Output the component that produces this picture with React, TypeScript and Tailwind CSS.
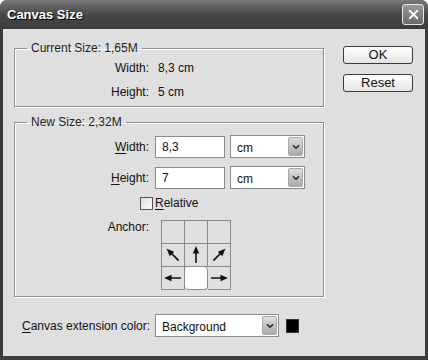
import { ChevronDown, X } from "lucide-react";

const font = "font-['Liberation_Sans',Arial,sans-serif]";

function Select({ value, width }: { value: string; width: string }) {
  return (
    <div className={`flex h-[23px] items-center border border-[#8a8a8a] bg-white ${width}`}>
      <span className="flex-1 pl-[6px] pt-[2px] text-[12px]">{value}</span>
      <span className="mr-[1px] flex h-[19px] w-[15px] items-center justify-center rounded-[2px] border border-[#a9a9a9] bg-gradient-to-b from-[#dedede] to-[#a9a9a9]">
        <ChevronDown className="h-[10px] w-[10px] text-[#2a2a2a]" strokeWidth={4} />
      </span>
    </div>
  );
}

function Arrow({ rot }: { rot: string }) {
  return (
    <svg width="20" height="20" viewBox="0 0 20 20" className={rot}>
      <line x1="10" y1="18" x2="10" y2="6" stroke="#111" strokeWidth="1.6" />
      <polygon points="6.8,8.5 10,1 13.2,8.5" fill="#111" />
    </svg>
  );
}

function Cell({ children, selected }: { children?: React.ReactNode; selected?: boolean }) {
  return (
    <div
      className={`flex h-[23px] w-[23px] items-center justify-center border-b border-r border-[#8a8a8a] ${
        selected ? "rounded-[4px] bg-white" : ""
      }`}
    >
      {children}
    </div>
  );
}

export default function App() {
  return (
    <div className={`flex h-[360px] w-[428px] flex-col overflow-hidden rounded-t-[7px] bg-[#3d3d3d] ${font} text-[12px] text-[#111]`}>
      {/* title bar */}
      <div className="flex h-[29px] shrink-0 items-center justify-between bg-gradient-to-b from-[#7a7a7a] via-[#474747] to-[#3c3c3c] pl-[7px] pr-[4px]">
        <span className="text-[13px] font-bold text-white [text-shadow:1px_1px_0_#000]">Canvas Size</span>
        <div className="flex h-[21px] w-[22px] items-center justify-center rounded-[3px] border border-[#e6e6e6] bg-gradient-to-b from-[#9a9a9a] to-[#6a6a6a]">
          <X className="h-[15px] w-[15px] text-white" strokeWidth={3} />
        </div>
      </div>

      {/* body */}
      <div className="mx-[3px] mb-[4px] flex min-h-0 flex-1 gap-[19px] bg-[#dfdfdf] pl-[11px] pt-[12px]">
        <div className="flex w-[310px] flex-col">
          <fieldset className="border border-[#8f8f8f] pb-[2px] shadow-[inset_1px_1px_0_#fff,1px_1px_0_#fff]">
            <legend className="ml-[12px] px-[4px] leading-[15px] text-[#222]">Current Size: 1,65M</legend>
            <div className="flex h-[24px] items-center">
              <span className="w-[134px] text-right">Width:</span>
              <span className="ml-[9px]">8,3 cm</span>
            </div>
            <div className="flex h-[24px] items-center">
              <span className="w-[134px] text-right">Height:</span>
              <span className="ml-[9px]">5 cm</span>
            </div>
          </fieldset>

          <fieldset className="mt-[8px] border border-[#8f8f8f] pb-[6px] shadow-[inset_1px_1px_0_#fff,1px_1px_0_#fff]">
            <legend className="ml-[12px] px-[4px] leading-[15px] text-[#222]">New Size: 2,32M</legend>
            <div className="mt-[5px] flex items-center">
              <span className="w-[134px] text-right">
                <u className="underline-offset-2">W</u>idth:
              </span>
              <div className="ml-[6px] flex h-[22px] w-[70px] items-center border border-[#8a8a8a] bg-white pl-[6px]">8,3</div>
              <div className="ml-[5px]">
                <Select value="cm" width="w-[75px]" />
              </div>
            </div>
            <div className="mt-[8px] flex items-center">
              <span className="w-[134px] text-right">
                <u className="underline-offset-2">H</u>eight:
              </span>
              <div className="ml-[6px] flex h-[22px] w-[70px] items-center border border-[#8a8a8a] bg-white pl-[6px]">7</div>
              <div className="ml-[5px]">
                <Select value="cm" width="w-[75px]" />
              </div>
            </div>
            <div className="mt-[5px] flex items-center pl-[125px]">
              <span className="h-[13px] w-[13px] border border-[#555] bg-gradient-to-br from-[#dcdcdc] to-white" />
              <span className="ml-[2px]">
                <u className="underline-offset-2">R</u>elative
              </span>
            </div>
            <div className="mt-[8px] flex items-start">
              <span className="w-[134px] text-right leading-[14px]">Anchor:</span>
              <div className="ml-[12px] grid grid-cols-3 border-l border-t border-[#8a8a8a]">
                <Cell />
                <Cell />
                <Cell />
                <Cell>
                  <Arrow rot="-rotate-45" />
                </Cell>
                <Cell>
                  <Arrow rot="" />
                </Cell>
                <Cell>
                  <Arrow rot="rotate-45" />
                </Cell>
                <Cell>
                  <Arrow rot="-rotate-90" />
                </Cell>
                <Cell selected />
                <Cell>
                  <Arrow rot="rotate-90" />
                </Cell>
              </div>
            </div>
          </fieldset>

          <div className="mt-[17px] flex items-center pl-[8px]">
            <span className="w-[127px] whitespace-nowrap">
              <u className="underline-offset-2">C</u>anvas extension color:
            </span>
            <div className="ml-[6px]">
              <Select value="Background" width="w-[124px]" />
            </div>
            <span className="ml-[7px] h-[14px] w-[13px] border border-[#333] bg-black" />
          </div>
        </div>

        <div className="flex flex-col gap-[10px] pt-[5px]">
          <button className="h-[18px] w-[70px] rounded-[3px] border border-[#3a3a3a] bg-gradient-to-b from-white to-[#e4e4e4] text-[13px] leading-[16px]">
            OK
          </button>
          <button className="h-[18px] w-[70px] rounded-[3px] border border-[#3a3a3a] bg-gradient-to-b from-white to-[#e4e4e4] text-[13px] leading-[16px]">
            Reset
          </button>
        </div>
      </div>
    </div>
  );
}
